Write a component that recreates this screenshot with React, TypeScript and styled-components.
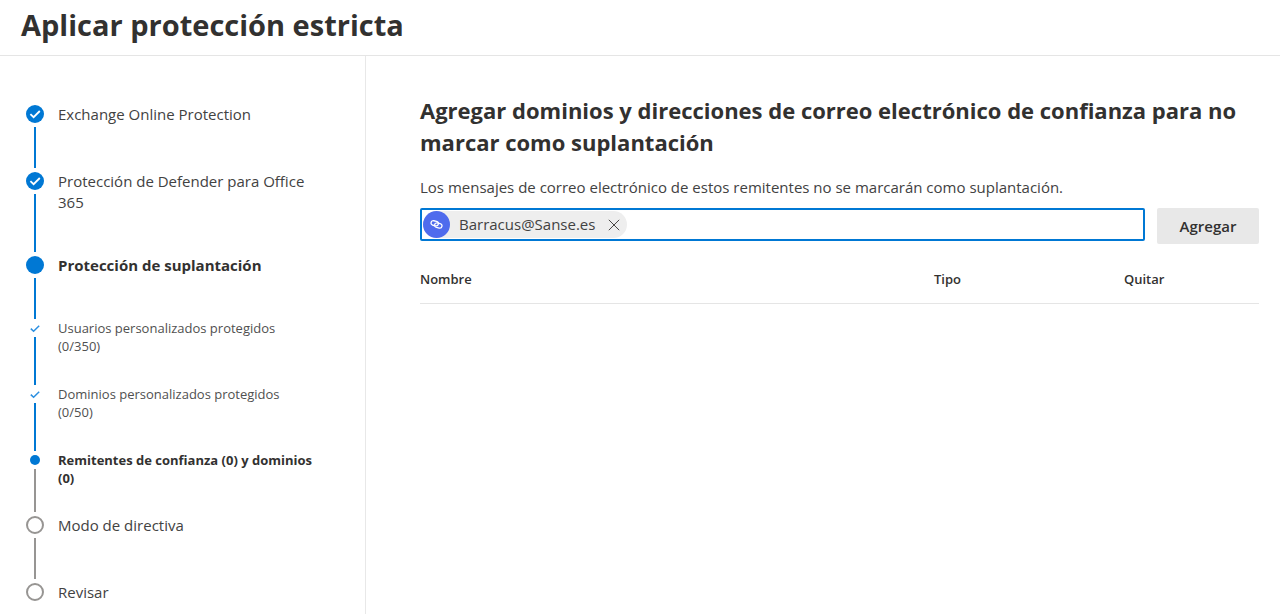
import React, { useState } from "react";
import styled, { createGlobalStyle, css } from "styled-components";

const GlobalStyle = createGlobalStyle`
  *, *::before, *::after { box-sizing: border-box; }
  body {
    margin: 0;
    background: #ffffff;
    color: #323130;
    font-family: "Open Sans", "Noto Sans", sans-serif;
    font-size: 15px;
    line-height: 21px;
  }
`;

const Page = styled.div`
  display: flex;
  flex-direction: column;
  min-height: 100vh;
`;

const Header = styled.header`
  padding: 5px 21px 10px;
  border-bottom: 1px solid #e5e5e5;
`;

const Title = styled.h1`
  margin: 0;
  font-size: 29px;
  line-height: 40px;
  font-weight: 700;
`;

const Body = styled.div`
  display: flex;
  flex: 1;
`;

const Sidebar = styled.nav`
  flex: 0 0 366px;
  padding: 45px 50px 0 26px;
  border-right: 1px solid #e8e8e8;
`;

const Steps = styled.ol`
  list-style: none;
  margin: 0;
  padding: 0;
`;

const StepItem = styled.li`
  display: flex;
  gap: 14px;
`;

const Track = styled.div`
  display: flex;
  flex-direction: column;
  align-items: center;
  flex: 0 0 18px;
`;

const MarkerBox = styled.span<{ $sub?: boolean }>`
  display: flex;
  align-items: center;
  justify-content: center;
  height: ${(p) => (p.$sub ? "18px" : "26px")};
`;

const Dot = styled.span<{ $size: number; $hollow?: boolean }>`
  width: ${(p) => p.$size}px;
  height: ${(p) => p.$size}px;
  border-radius: 50%;
  ${(p) =>
    p.$hollow
      ? css`
          border: 2px solid #979593;
        `
      : css`
          background: #0078d4;
        `}
`;

const Line = styled.span<{ $pending?: boolean }>`
  flex: 1;
  width: 2px;
  background: ${(p) => (p.$pending ? "#979593" : "#0078d4")};
`;

const StepLabel = styled.div<{ $sub?: boolean; $current?: boolean; $groupEnd?: boolean }>`
  flex: 1;
  font-weight: ${(p) => (p.$current ? 700 : 400)};
  ${(p) =>
    p.$sub
      ? css`
          padding-bottom: ${p.$groupEnd ? "25px" : "30px"};
          font-size: 13px;
          line-height: 18px;
          color: ${p.$current ? "#323130" : "#505050"};
        `
      : css`
          min-height: 67px;
          padding: 3px 0 39px;
          color: ${p.$current ? "#323130" : "#424242"};
        `}
`;

const LastLabel = styled(StepLabel)`
  min-height: 0;
  padding-bottom: 8px;
`;

const Main = styled.main`
  flex: 1;
  min-width: 0;
  padding: 38px 21px 24px 54px;
`;

const Heading = styled.h2`
  margin: 0;
  font-size: 22px;
  line-height: 32px;
  font-weight: 700;
`;

const Description = styled.label`
  display: block;
  margin-top: 19px;
  color: #424242;
`;

const AddRow = styled.form`
  display: flex;
  align-items: flex-start;
  gap: 12px;
  margin-top: 10px;
`;

const Picker = styled.div`
  display: flex;
  flex: 1;
  min-width: 0;
  align-items: center;
  height: 33px;
  padding: 0 1px;
  border: 2px solid #0078d4;
  border-radius: 2px;
`;

const Chip = styled.span`
  display: flex;
  align-items: center;
  height: 27px;
  padding-right: 5px;
  border-radius: 14px;
  background: #eeeeee;
  color: #424242;
`;

const Avatar = styled.span`
  display: flex;
  align-items: center;
  justify-content: center;
  width: 27px;
  height: 27px;
  margin-right: 9px;
  border-radius: 50%;
  background: #4f6bed;
`;

const RemoveButton = styled.button`
  display: flex;
  align-items: center;
  justify-content: center;
  width: 16px;
  height: 20px;
  margin-left: 11px;
  padding: 0;
  border: 0;
  background: none;
`;

const PickerInput = styled.input`
  flex: 1;
  min-width: 0;
  height: 27px;
  padding: 0 8px;
  border: 0;
  outline: 0;
  background: none;
  font: inherit;
  color: inherit;
`;

const AddButton = styled.button`
  width: 102px;
  height: 36px;
  padding: 0;
  border: 0;
  border-radius: 2px;
  background: #e8e8e8;
  color: #323130;
  font: inherit;
  font-weight: 600;
`;

const Table = styled.table`
  width: 100%;
  margin-top: 11px;
  border-collapse: collapse;
  table-layout: fixed;
`;

const Th = styled.th<{ $width?: number }>`
  width: ${(p) => (p.$width ? `${p.$width}px` : "auto")};
  height: 48px;
  padding: 0;
  border-bottom: 1px solid #e5e5e5;
  text-align: left;
  font-size: 13px;
  line-height: 18px;
  font-weight: 600;
`;

const CheckCircle = () => (
  <svg width="18" height="18" viewBox="0 0 18 18" aria-hidden="true">
    <circle cx="9" cy="9" r="9" fill="#0078d4" />
    <path d="M4.4 9.2 7.6 12.2 13.8 6" fill="none" stroke="#fff" strokeWidth="1.8" />
  </svg>
);

const SmallCheck = () => (
  <svg width="10" height="10" viewBox="0 0 10 10" aria-hidden="true">
    <path d="M.8 5.6 3.6 8.3 9.2 2.8" fill="none" stroke="#2b8fe0" strokeWidth="1.5" />
  </svg>
);

const LinkGlyph = () => (
  <svg width="13" height="11" viewBox="0 0 13 11" fill="none" stroke="#fff" strokeWidth="1.3" aria-hidden="true">
    <rect x="1" y="2" width="7.4" height="4.6" rx="2.3" transform="rotate(12 4.7 4.3)" />
    <rect x="4.6" y="4.2" width="7.4" height="4.6" rx="2.3" transform="rotate(12 8.3 6.5)" />
  </svg>
);

const CloseGlyph = () => (
  <svg width="12" height="12" viewBox="0 0 12 12" aria-hidden="true">
    <path d="M.8.8 11.2 11.2M11.2.8.8 11.2" stroke="#484644" strokeWidth="1" />
  </svg>
);

type State = "done" | "current" | "pending";
type Step = { label: string; state: State; sub?: boolean; next?: State; groupEnd?: boolean };

const steps: Step[] = [
  { label: "Exchange Online Protection", state: "done" },
  { label: "Protección de Defender para Office 365", state: "done" },
  { label: "Protección de suplantación", state: "current" },
  { label: "Usuarios personalizados protegidos (0/350)", state: "done", sub: true },
  { label: "Dominios personalizados protegidos (0/50)", state: "done", sub: true },
  {
    label: "Remitentes de confianza (0) y dominios (0)",
    state: "current",
    sub: true,
    next: "pending",
    groupEnd: true,
  },
  { label: "Modo de directiva", state: "pending", next: "pending" },
  { label: "Revisar", state: "pending" },
];

const Marker = ({ state, sub }: { state: State; sub?: boolean }) => {
  if (state === "done") return sub ? <SmallCheck /> : <CheckCircle />;
  return <Dot $size={sub ? 10 : 18} $hollow={state === "pending"} />;
};

export default function App() {
  const [chips, setChips] = useState(["Barracus@Sanse.es"]);
  const [text, setText] = useState("");

  return (
    <Page>
      <GlobalStyle />
      <Header>
        <Title>Aplicar protección estricta</Title>
      </Header>
      <Body>
        <Sidebar aria-label="Pasos">
          <Steps>
            {steps.map((step, i) => {
              const last = i === steps.length - 1;
              const Label = last ? LastLabel : StepLabel;
              return (
                <StepItem key={step.label}>
                  <Track>
                    <MarkerBox $sub={step.sub}>
                      <Marker state={step.state} sub={step.sub} />
                    </MarkerBox>
                    {!last && <Line $pending={step.next === "pending"} />}
                  </Track>
                  <Label $sub={step.sub} $current={step.state === "current"} $groupEnd={step.groupEnd}>
                    {step.label}
                  </Label>
                </StepItem>
              );
            })}
          </Steps>
        </Sidebar>
        <Main>
          <Heading>
            Agregar dominios y direcciones de correo electrónico de confianza para no marcar como suplantación
          </Heading>
          <Description htmlFor="senders">
            Los mensajes de correo electrónico de estos remitentes no se marcarán como suplantación.
          </Description>
          <AddRow onSubmit={(e) => e.preventDefault()}>
            <Picker>
              {chips.map((chip) => (
                <Chip key={chip}>
                  <Avatar>
                    <LinkGlyph />
                  </Avatar>
                  {chip}
                  <RemoveButton
                    type="button"
                    aria-label={`Quitar ${chip}`}
                    onClick={() => setChips(chips.filter((c) => c !== chip))}
                  >
                    <CloseGlyph />
                  </RemoveButton>
                </Chip>
              ))}
              <PickerInput id="senders" value={text} onChange={(e) => setText(e.target.value)} />
            </Picker>
            <AddButton type="submit">Agregar</AddButton>
          </AddRow>
          <Table>
            <thead>
              <tr>
                <Th scope="col">Nombre</Th>
                <Th scope="col" $width={190}>Tipo</Th>
                <Th scope="col" $width={135}>Quitar</Th>
              </tr>
            </thead>
          </Table>
        </Main>
      </Body>
    </Page>
  );
}
